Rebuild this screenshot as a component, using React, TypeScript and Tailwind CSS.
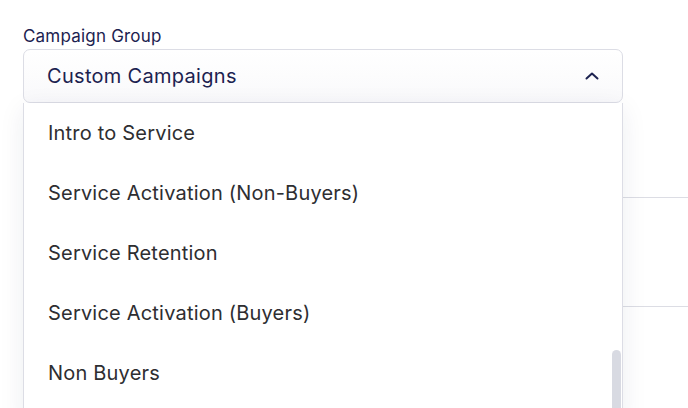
import React from "react";

const items = [
  "Intro to Service",
  "Service Activation (Non-Buyers)",
  "Service Retention",
  "Service Activation (Buyers)",
  "Non Buyers",
];

export default function App() {
  return (
    <div
      className="relative w-[688px] h-[408px] overflow-hidden bg-white"
      style={{ fontFamily: "Inter, 'Noto Sans', sans-serif" }}
    >
      <div className="flex flex-col pt-[26px]">
        <div className="pl-[23px] w-[623px]">
          <div className="text-[17px] leading-[20px] text-[#1c2250] tracking-[0.2px]">Campaign Group</div>
          <div className="relative mt-[3px]">
            <div className="h-[54px] rounded-[7px] border border-[#dcdde5] bg-gradient-to-b from-white to-[#f9f9fb] flex items-center justify-between pl-[23px] pr-[22px]">
              <span className="text-[20px] text-[#1c2250] tracking-[0.3px]">Custom Campaigns</span>
              <svg width="16" height="10" viewBox="0 0 16 10" fill="none">
                <path d="M2.5 7.5 L8 2.5 L13.5 7.5" stroke="#1c2250" strokeWidth="2" strokeLinecap="round" strokeLinejoin="round" />
              </svg>
            </div>
            <div className="absolute left-0 right-0 top-[54px] z-10 h-[320px] bg-white border-x border-[#dcdde5] shadow-[0_6px_24px_rgba(30,35,80,0.08)]">
              <div className="flex flex-col">
                {items.map((t) => (
                  <div key={t} className="h-[60px] flex items-center pl-[24px] text-[20px] text-[#2e2e31] tracking-[0.2px]">
                    {t}
                  </div>
                ))}
              </div>
              <div className="absolute right-[1px] top-[247px] w-[9px] h-[80px] rounded-t-full bg-[#d8dae2]" />
            </div>
          </div>
        </div>
        <div className="ml-[300px] h-[95px] border-b border-[#dcdde4]" />
        <div className="ml-[300px] h-[109px] border-b border-[#dcdde4]" />
      </div>
    </div>
  );
}
